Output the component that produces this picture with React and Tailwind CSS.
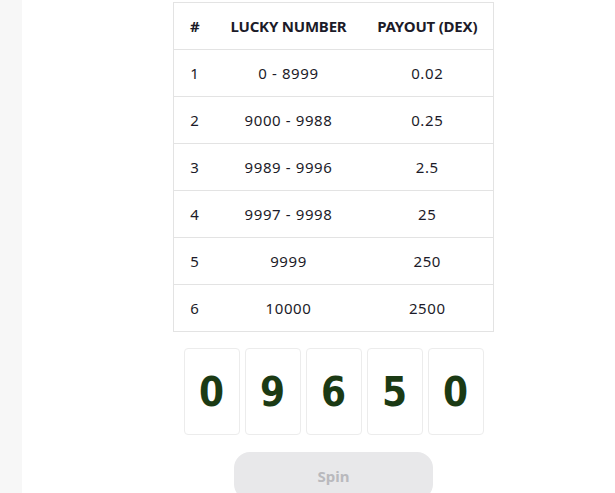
const rows = [
  ["1", "0 - 8999", "0.02"],
  ["2", "9000 - 9988", "0.25"],
  ["3", "9989 - 9996", "2.5"],
  ["4", "9997 - 9998", "25"],
  ["5", "9999", "250"],
  ["6", "10000", "2500"],
];

const digits = ["0", "9", "6", "5", "0"];

export default function App() {
  return (
    <div className="flex min-h-[493px] bg-white font-['Noto_Sans',sans-serif] text-[#1c1b29]">
      <div className="w-[22px] shrink-0 bg-[#f7f7f7]" />
      <div className="flex-1 pl-[151px] pt-[2px]">
        <div className="flex w-[321px] flex-col items-center">
          <table className="w-full border-collapse border border-[#e3e3e3] text-[15px]">
            <thead>
              <tr className="h-[47px] border-b border-[#e3e3e3] font-bold tracking-[-0.2px]">
                <th className="w-[42px] text-center">#</th>
                <th className="w-[146px] text-center">LUCKY NUMBER</th>
                <th className="text-center">PAYOUT (DEX)</th>
              </tr>
            </thead>
            <tbody className="font-normal tracking-[0.6px]">
              {rows.map((r) => (
                <tr key={r[0]} className="h-[47px] border-b border-[#e3e3e3]">
                  <td className="text-center">{r[0]}</td>
                  <td className="text-center">{r[1]}</td>
                  <td className="text-center">{r[2]}</td>
                </tr>
              ))}
            </tbody>
          </table>

          <div className="mt-[16px] flex gap-[5px]">
            {digits.map((d, i) => (
              <div
                key={i}
                className="flex h-[87px] w-[56px] items-center justify-center rounded-[4px] border border-[#ececec] font-['DejaVu_Sans_Condensed','DejaVu_Sans',sans-serif] text-[40px] font-bold text-[#1b3a14]"
              >
                {d}
              </div>
            ))}
          </div>

          <button className="mt-[17px] h-[48px] w-[199px] rounded-[16px] bg-[#e8e8ea] text-[15px] font-bold text-[#b9b9bd]">
            Spin
          </button>
        </div>
      </div>
    </div>
  );
}
